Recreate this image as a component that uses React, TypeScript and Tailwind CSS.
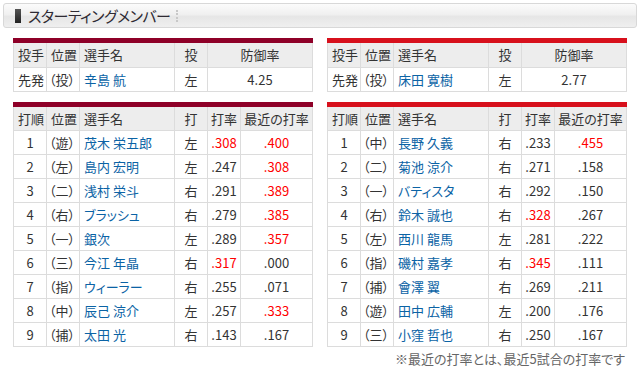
import React from "react";

type Batter = {
  order: number;
  pos: string;
  name: string;
  hand: string;
  avg: string;
  recent: string;
  avgHot?: boolean;
  recentHot?: boolean;
};

type Side = {
  accent: string;
  pitcher: { pos: string; name: string; hand: string; era: string };
  batters: Batter[];
};

const sides: Side[] = [
  {
    accent: "border-t-[#8e0028]",
    pitcher: { pos: "（投）", name: "辛島 航", hand: "左", era: "4.25" },
    batters: [
      { order: 1, pos: "（遊）", name: "茂木 栄五郎", hand: "左", avg: ".308", recent: ".400", avgHot: true, recentHot: true },
      { order: 2, pos: "（左）", name: "島内 宏明", hand: "左", avg: ".247", recent: ".308", recentHot: true },
      { order: 3, pos: "（二）", name: "浅村 栄斗", hand: "右", avg: ".291", recent: ".389", recentHot: true },
      { order: 4, pos: "（右）", name: "ブラッシュ", hand: "右", avg: ".279", recent: ".385", recentHot: true },
      { order: 5, pos: "（一）", name: "銀次", hand: "左", avg: ".289", recent: ".357", recentHot: true },
      { order: 6, pos: "（三）", name: "今江 年晶", hand: "右", avg: ".317", recent: ".000", avgHot: true },
      { order: 7, pos: "（指）", name: "ウィーラー", hand: "右", avg: ".255", recent: ".071" },
      { order: 8, pos: "（中）", name: "辰己 涼介", hand: "左", avg: ".257", recent: ".333", recentHot: true },
      { order: 9, pos: "（捕）", name: "太田 光", hand: "右", avg: ".143", recent: ".167" },
    ],
  },
  {
    accent: "border-t-[#d7101c]",
    pitcher: { pos: "（投）", name: "床田 寛樹", hand: "左", era: "2.77" },
    batters: [
      { order: 1, pos: "（中）", name: "長野 久義", hand: "右", avg: ".233", recent: ".455", recentHot: true },
      { order: 2, pos: "（二）", name: "菊池 涼介", hand: "右", avg: ".271", recent: ".158" },
      { order: 3, pos: "（一）", name: "バティスタ", hand: "右", avg: ".292", recent: ".150" },
      { order: 4, pos: "（右）", name: "鈴木 誠也", hand: "右", avg: ".328", recent: ".267", avgHot: true },
      { order: 5, pos: "（左）", name: "西川 龍馬", hand: "左", avg: ".281", recent: ".222" },
      { order: 6, pos: "（指）", name: "磯村 嘉孝", hand: "右", avg: ".345", recent: ".111", avgHot: true },
      { order: 7, pos: "（捕）", name: "會澤 翼", hand: "右", avg: ".269", recent: ".211" },
      { order: 8, pos: "（遊）", name: "田中 広輔", hand: "左", avg: ".200", recent: ".176" },
      { order: 9, pos: "（三）", name: "小窪 哲也", hand: "右", avg: ".250", recent: ".167" },
    ],
  },
];

// header cells also carry half of the 5px top rule
const th = "h-[26.5px] border border-[#dcdcdc] bg-[#ededed] font-normal p-0";
const td = "h-[24px] border border-[#dcdcdc] bg-white p-0";

function PitcherTable({ side }: { side: Side }) {
  const p = side.pitcher;
  return (
    <table className={`w-[300px] table-fixed border-collapse border-t-[5px] ${side.accent}`}>
      <colgroup>
        <col className="w-[33px]" />
        <col className="w-[33px]" />
        <col className="w-[95px]" />
        <col className="w-[33px]" />
        <col />
      </colgroup>
      <thead>
        <tr>
          <th className={`${th} text-left pl-[4px]`}>投手</th>
          <th className={`${th} text-left pl-[4px]`}>位置</th>
          <th className={`${th} text-left pl-[4px]`}>選手名</th>
          <th className={`${th} text-center`}>投</th>
          <th className={`${th} text-center`}>防御率</th>
        </tr>
      </thead>
      <tbody>
        <tr>
          <td className={`${td} pl-[4px]`}>先発</td>
          <td className={`${td} pl-[2px]`}>{p.pos}</td>
          <td className={`${td} pl-[4px] text-[#0b63a5]`}>{p.name}</td>
          <td className={`${td} text-center`}>{p.hand}</td>
          <td className={`${td} text-center`}>{p.era}</td>
        </tr>
      </tbody>
    </table>
  );
}

function BatterTable({ side }: { side: Side }) {
  return (
    <table className={`w-[300px] table-fixed border-collapse border-t-[5px] ${side.accent}`}>
      <colgroup>
        <col className="w-[33px]" />
        <col className="w-[33px]" />
        <col className="w-[95px]" />
        <col className="w-[33px]" />
        <col className="w-[33px]" />
        <col />
      </colgroup>
      <thead>
        <tr>
          <th className={`${th} text-left pl-[4px]`}>打順</th>
          <th className={`${th} text-left pl-[4px]`}>位置</th>
          <th className={`${th} text-left pl-[4px]`}>選手名</th>
          <th className={`${th} text-center`}>打</th>
          <th className={`${th} text-center`}>打率</th>
          <th className={`${th} text-center`}>最近の打率</th>
        </tr>
      </thead>
      <tbody>
        {side.batters.map((b) => (
          <tr key={b.order}>
            <td className={`${td} text-center`}>{b.order}</td>
            <td className={`${td} pl-[2px]`}>{b.pos}</td>
            <td className={`${td} pl-[4px] text-[#0b63a5]`}>{b.name}</td>
            <td className={`${td} text-center`}>{b.hand}</td>
            <td className={`${td} text-center ${b.avgHot ? "text-[#ff0000]" : ""}`}>{b.avg}</td>
            <td className={`${td} text-center ${b.recentHot ? "text-[#ff0000]" : ""}`}>{b.recent}</td>
          </tr>
        ))}
      </tbody>
    </table>
  );
}

export default function App() {
  return (
    <div className="w-[640px] h-[373px] bg-white overflow-hidden text-[13px] leading-none text-[#333] font-['Noto_Sans_CJK_JP','Noto_Sans',sans-serif] [font-feature-settings:'palt']">
      <div className="mx-[3px] mt-[3px] h-[25px] rounded-[3px] border border-[#d8d8d8] bg-[linear-gradient(#fbfbfb,#f0f0f0_45%,#e6e6e6_55%,#efefef)] flex items-center pl-[11px]">
        <div className="w-[6px] h-[14px] bg-[linear-gradient(#555,#222)]" />
        <span className="ml-[7px] text-[15px] text-[#2e2a33] tracking-[-0.5px]">スターティングメンバー</span>
        <div className="ml-[6px] h-[12px] border-l-2 border-dotted border-[#c8c8c8]" />
      </div>

      <div className="flex gap-[14px] px-[13px] mt-[10px]">
        {sides.map((s, i) => (
          <div key={i} className="flex flex-col gap-[10px]">
            <PitcherTable side={s} />
            <BatterTable side={s} />
          </div>
        ))}
      </div>

      <div className="pr-[15px] mt-[5px] text-right text-[#666]">
        ※最近の打率とは、最近5試合の打率です
      </div>
    </div>
  );
}
